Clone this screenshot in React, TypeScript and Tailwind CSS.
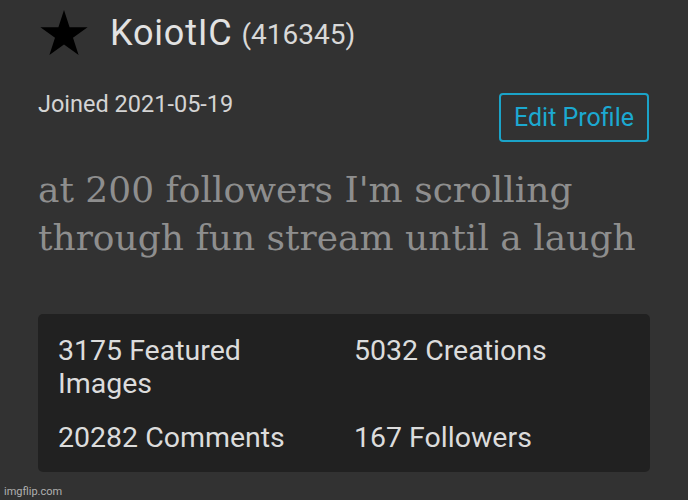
import React from "react";

const stats = [
  { label: "3175 Featured Images" },
  { label: "5032 Creations" },
  { label: "20282 Comments" },
  { label: "167 Followers" },
];

function Star() {
  return (
    <svg width="50" height="46" viewBox="0 0 24 23" className="shrink-0">
      <polygon
        points="12,0 14.8,8.6 23.8,8.6 16.5,13.9 19.3,22.5 12,17.2 4.7,22.5 7.5,13.9 0.2,8.6 9.2,8.6"
        fill="#000"
      />
    </svg>
  );
}

export default function App() {
  return (
    <div
      className="w-[688px] h-[500px] bg-[#323232] relative overflow-hidden"
      style={{ fontFamily: "Roboto, 'Noto Sans', sans-serif" }}
    >
      {/* header */}
      <div className="flex items-center pl-[39px] pt-[9px] h-[56px]">
        <Star />
        <span className="ml-[21px] text-[36px] tracking-[0.8px] text-[#e2e2e2] leading-none">KoiotIC</span>
        <span className="ml-[9px] text-[28px] text-[#d8d8d8] leading-none mt-[4px]">(416345)</span>
      </div>

      {/* joined + edit */}
      <div className="flex justify-between items-start pl-[38px] pr-[39px] mt-[37px]">
        <span className="text-[23.5px] text-[#d4d4d4] leading-none">Joined 2021-05-19</span>
        <button className="w-[150px] h-[49px] border-2 border-[#1ba3c8] rounded-[4px] text-[#1ca9d1] text-[25px] leading-none">
          Edit Profile
        </button>
      </div>

      {/* bio */}
      <p
        className="pl-[38px] pr-[10px] mt-[24px] text-[36px] leading-[48px] text-[#8e8e8e] whitespace-nowrap"
        style={{ fontFamily: "'DejaVu Serif', serif" }}
      >
        at 200 followers I'm scrolling
        <br />
        through fun stream until a laugh
      </p>

      {/* stats */}
      <div className="mx-[38px] mt-[52px] h-[158px] bg-[#212121] rounded-[5px] pl-[20px] pt-[20px]">
        <div className="grid grid-cols-[296px_1fr] gap-y-[21px] text-[28.5px] leading-[33px] text-[#dcdcdc]">
          {stats.map((s) => (
            <div key={s.label} className="w-[230px]">{s.label}</div>
          ))}
        </div>
      </div>

      <div className="absolute left-[4px] bottom-[3px] text-[11px] text-[#b0b0b0] leading-none">
        imgflip.com
      </div>
    </div>
  );
}
